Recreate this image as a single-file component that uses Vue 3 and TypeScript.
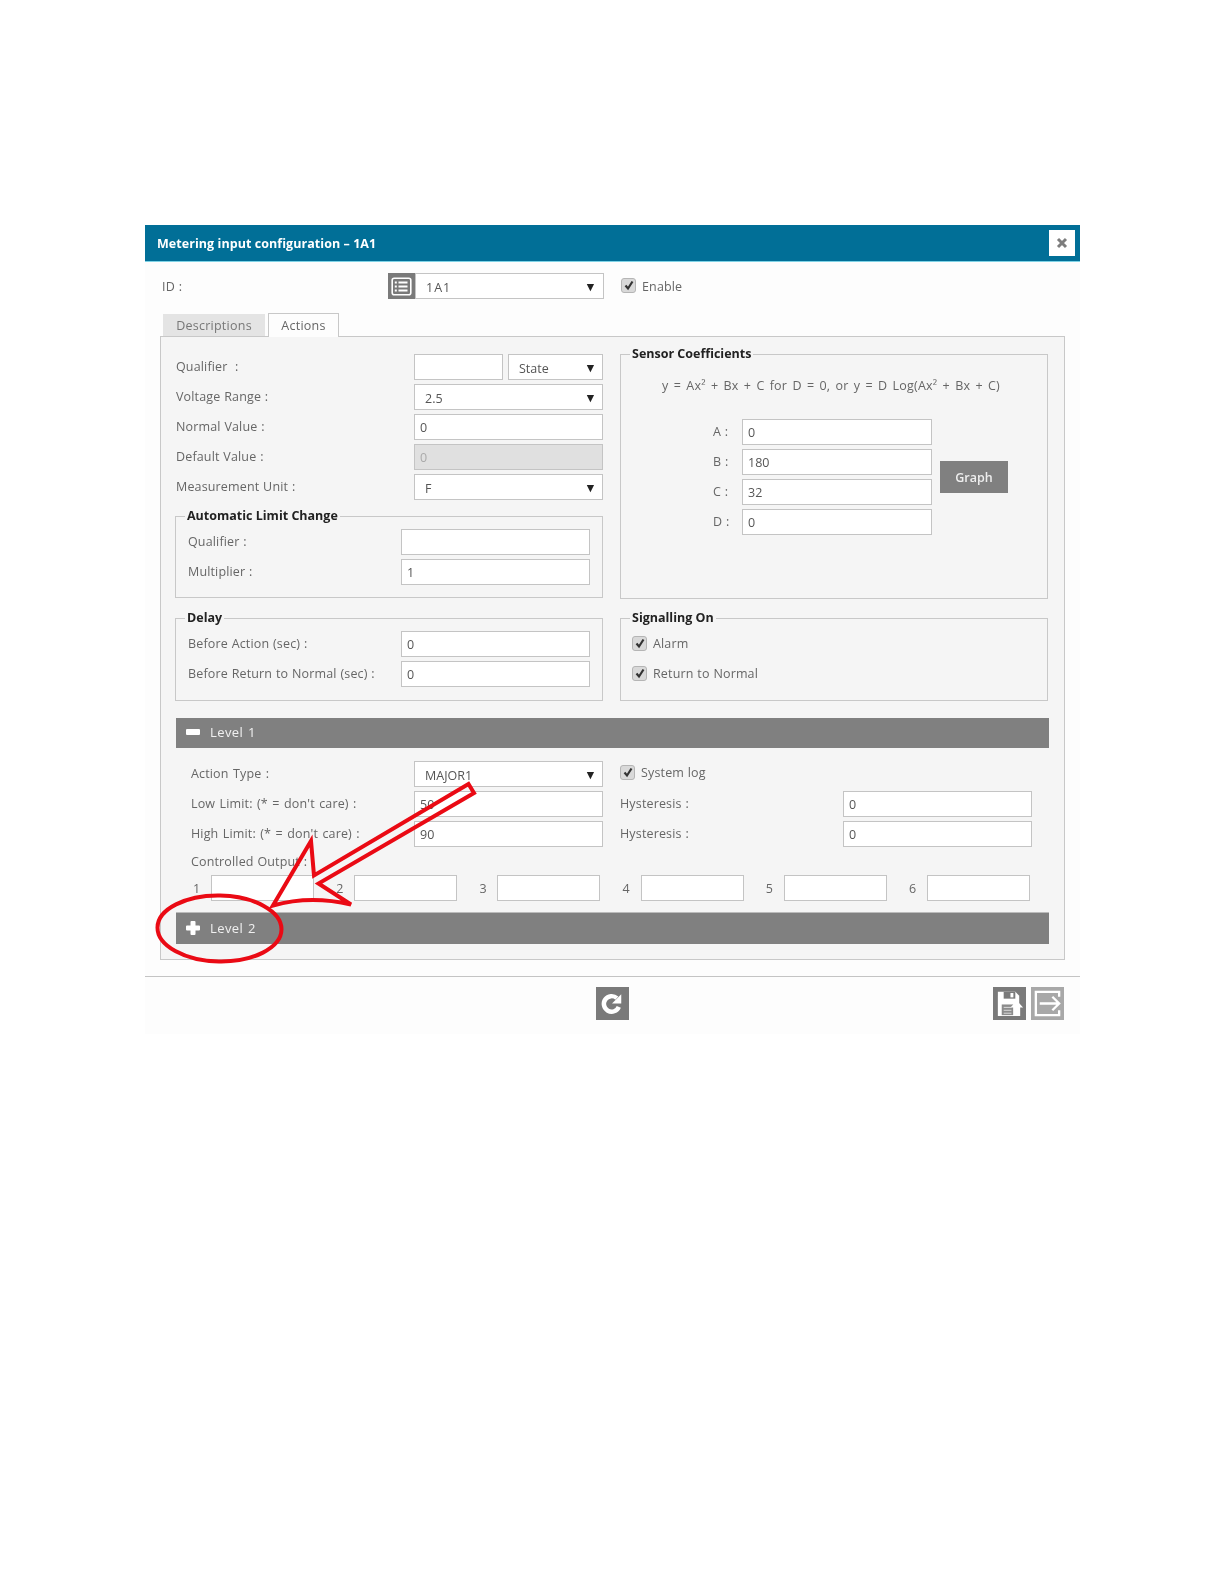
<script setup lang="ts">
interface Row { label: string; value?: string; select?: boolean; disabled?: boolean }
const mainRows: Row[] = [
  { label: 'Voltage Range :', value: '2.5', select: true },
  { label: 'Normal Value :', value: '0' },
  { label: 'Default Value :', value: '0', disabled: true },
  { label: 'Measurement Unit :', value: 'F', select: true },
]
const coefficients = [
  { label: 'A :', value: '0' },
  { label: 'B :', value: '180' },
  { label: 'C :', value: '32' },
  { label: 'D :', value: '0' },
]
const outputs = ['1', '2', '3', '4', '5', '6']
</script>

<template>
  <div class="dialog">
    <header class="head">
      <span class="title">Metering input configuration – 1A1</span>
      <span class="close">
        <svg width="12" height="12" viewBox="0 0 12 12"><path d="M2 2l8 8M10 2l-8 8" stroke="#7d7d7d" stroke-width="3" /></svg>
      </span>
    </header>

    <div class="id-row">
      <span class="lbl id-lbl">ID :</span>
      <span class="list-btn">
        <svg width="21" height="19" viewBox="0 0 21 19" fill="none" stroke="#fff">
          <rect x="1.2" y="1.2" width="18.6" height="16.6" rx="2" stroke-width="1.6" />
          <path d="M7.5 5.5h9M7.5 9.5h9M7.5 13.5h9M3.8 5.5h2M3.8 9.5h2M3.8 13.5h2" stroke-width="1.8" />
        </svg>
      </span>
      <div class="field sel id-sel"><span>1A1</span><i class="caret">▼</i></div>
      <span class="check id-check"><svg width="12" height="12" viewBox="0 0 12 12"><path d="M2.5 6.5l2.5 3 4.5-7" fill="none" stroke="#333" stroke-width="2.2" /></svg></span>
      <span class="lbl">Enable</span>
    </div>

    <div class="tabs">
      <span class="tab">Descriptions</span>
      <span class="tab active">Actions</span>
    </div>

    <section class="panel">
      <div class="columns">
        <div class="left">
          <div class="rows top-rows">
            <div class="row">
              <span class="lbl">Qualifier&nbsp; :</span>
              <div class="pair">
                <div class="field qual"></div>
                <div class="field sel state"><span>State</span><i class="caret">▼</i></div>
              </div>
            </div>
            <div v-for="r in mainRows" :key="r.label" class="row">
              <span class="lbl">{{ r.label }}</span>
              <div class="field wide" :class="{ sel: r.select, off: r.disabled }">
                <span>{{ r.value }}</span><i v-if="r.select" class="caret">▼</i>
              </div>
            </div>
          </div>

          <fieldset class="box auto-box">
            <legend>Automatic Limit Change</legend>
            <div class="rows">
              <div class="row inner"><span class="lbl">Qualifier :</span><div class="field wide"></div></div>
              <div class="row inner"><span class="lbl">Multiplier :</span><div class="field wide">1</div></div>
            </div>
          </fieldset>

          <fieldset class="box delay-box">
            <legend>Delay</legend>
            <div class="rows">
              <div class="row inner"><span class="lbl">Before Action (sec) :</span><div class="field wide">0</div></div>
              <div class="row inner"><span class="lbl">Before Return to Normal (sec) :</span><div class="field wide">0</div></div>
            </div>
          </fieldset>
        </div>

        <div class="right">
          <fieldset class="box sensor">
            <legend>Sensor Coefficients</legend>
            <p class="formula">y = Ax² + Bx + C for D = 0, or y = D Log(Ax² + Bx + C)</p>
            <div class="coef">
              <div class="rows">
                <div v-for="c in coefficients" :key="c.label" class="coef-row">
                  <span class="lbl coef-lbl">{{ c.label }}</span>
                  <div class="field coef-in">{{ c.value }}</div>
                </div>
              </div>
              <span class="graph">Graph</span>
            </div>
          </fieldset>

          <fieldset class="box signal">
            <legend>Signalling On</legend>
            <div class="rows">
              <div class="check-row">
                <span class="check"><svg width="12" height="12" viewBox="0 0 12 12"><path d="M2.5 6.5l2.5 3 4.5-7" fill="none" stroke="#333" stroke-width="2.2" /></svg></span>
                <span class="lbl">Alarm</span>
              </div>
              <div class="check-row">
                <span class="check"><svg width="12" height="12" viewBox="0 0 12 12"><path d="M2.5 6.5l2.5 3 4.5-7" fill="none" stroke="#333" stroke-width="2.2" /></svg></span>
                <span class="lbl">Return to Normal</span>
              </div>
            </div>
          </fieldset>
        </div>
      </div>

      <div class="bar">
        <svg class="bar-ico" width="14" height="14" viewBox="0 0 14 14"><rect x="0" y="4" width="14" height="6" rx="1" fill="#fff" /></svg>
        <span>Level 1</span>
      </div>
      <div class="level">
        <div class="lv-grid">
          <div class="row lv"><span class="lbl">Action Type :</span>
            <div class="field wide sel"><span>MAJOR1</span><i class="caret">▼</i></div></div>
          <div class="check-row syslog">
            <span class="check"><svg width="12" height="12" viewBox="0 0 12 12"><path d="M2.5 6.5l2.5 3 4.5-7" fill="none" stroke="#333" stroke-width="2.2" /></svg></span>
            <span class="lbl">System log</span>
          </div>
          <div class="row lv"><span class="lbl">Low Limit: (* = don't care) :</span><div class="field wide">50</div></div>
          <div class="row hy"><span class="lbl">Hysteresis :</span><div class="field wide">0</div></div>
          <div class="row lv"><span class="lbl">High Limit: (* = don't care) :</span><div class="field wide">90</div></div>
          <div class="row hy"><span class="lbl">Hysteresis :</span><div class="field wide">0</div></div>
        </div>
        <div class="lbl co-lbl">Controlled Output :</div>
        <div class="outs">
          <div v-for="o in outputs" :key="o" class="out">
            <span class="lbl out-n">{{ o }}</span>
            <div class="field out-in"></div>
          </div>
        </div>
      </div>
      <div class="bar bar2">
        <svg class="bar-ico" width="14" height="14" viewBox="0 0 14 14"><path d="M4.5 1a1 1 0 0 1 1-1h3a1 1 0 0 1 1 1v3.500h3.500a1 1 0 0 1 1 1v3a1 1 0 0 1-1 1H9.500V13a1 1 0 0 1-1 1h-3a1 1 0 0 1-1-1V9.500H1a1 1 0 0 1-1-1v-3a1 1 0 0 1 1-1h3.500z" fill="#fff" /></svg>
        <span>Level 2</span>
      </div>
    </section>

    <footer class="foot">
      <span></span>
      <span class="tool">
        <svg width="33" height="33" viewBox="0 0 34 34" fill="none">
          <path d="M23.500 20.500a8 8 0 1 1-2-9" stroke="#fff" stroke-width="4.600" />
          <path d="M26 7.500v9.500h-9.500z" fill="#fff" />
        </svg>
      </span>
      <div class="tools-right">
        <span class="tool">
          <svg width="33" height="33" viewBox="0 0 34 34">
            <path d="M5 5h18l4 4v21H5z" fill="#fff" />
            <rect x="11" y="5" width="12" height="7" fill="#7a7a7a" />
            <rect x="18" y="6.200" width="3" height="4.500" fill="#fff" />
            <rect x="9" y="18" width="12" height="11" fill="#8c8c8c" />
            <path d="M11 21h8M11 24h8M11 27h8" stroke="#ddd" stroke-width="1" />
            <path d="M24.500 14l6.500 7h-3v9h-7v-9h-3z" fill="#fff" />
          </svg>
        </span>
        <span class="tool light">
          <svg width="33" height="33" viewBox="0 0 34 34" fill="none" stroke="#fff" stroke-width="2.400">
            <path d="M29 10V5H5v24h24v-5" />
            <path d="M9 17h20M22 10l7 7-7 7" />
          </svg>
        </span>
      </div>
    </footer>
  </div>

  <svg class="marks" width="1224" height="1584" viewBox="0 0 1224 1584" fill="none">
    <path d="M468.500 784L314 875.500 311 841 273 905.500Q310 895 351 904.500L318.500 883.500 474 793z" stroke="#ea0a14" stroke-width="4" stroke-linejoin="miter" />
    <ellipse cx="219.500" cy="928.500" rx="62" ry="33" stroke="#ea0a14" stroke-width="4" transform="rotate(1 219.500 928.500)" />
  </svg>
</template>

<style>
html, body { margin: 0; background: #fff; }
</style>

<style scoped>
.dialog {
  width: 935px;
  height: 809px;
  margin: 225px 0 0 145px;
  background: #fdfdfd;
  font-family: "Open Sans", "Liberation Sans", sans-serif;
  font-size: 12.5px;
  color: #666;
  display: flex;
  flex-direction: column;
  box-sizing: border-box;
  filter: blur(0.35px);
}
.head {
  height: 37px;
  flex: none;
  background: #016f97;
  border-bottom: 1px solid #7fd3e6;
  box-sizing: border-box;
  display: flex;
  align-items: center;
  justify-content: space-between;
  padding: 0 5px 0 12px;
}
.title { color: #fff; font-weight: 700; font-size: 12.5px; letter-spacing: 0.06px; }
.close {
  width: 26px; height: 26px; background: #fff;
  display: flex; align-items: center; justify-content: center;
}
.lbl { color: #666; white-space: nowrap; letter-spacing: 0.15px; word-spacing: 0.4px; }
.id-row {
  display: flex; align-items: center; height: 26px;
  margin: 11px 0 0 17px;
}
.id-lbl { width: 226px; }
.list-btn {
  width: 27px; height: 26px; background: #7a7a7a;
  display: flex; align-items: center; justify-content: center;
}
.field {
  height: 26px; box-sizing: border-box;
  border: 1px solid #c4c4c4; background: #fff;
  padding: 0 5px; display: flex; align-items: center;
  color: #555;
}
.sel { padding: 2px 8px 0 10px; justify-content: space-between; }
.caret { font-style: normal; font-size: 9.5px; color: #222; margin-top: -2px; font-family: "DejaVu Sans", sans-serif; }
.id-sel { width: 189px; letter-spacing: 1px; }
.check {
  width: 15px; height: 15px; box-sizing: border-box;
  border: 1px solid #b5b5b5; border-radius: 3px; background: #d9d9d9;
  display: inline-flex; align-items: center; justify-content: center; flex: none;
}
.id-check { margin: -2px 6px 0 17px; }
.tabs { display: flex; gap: 3px; margin: 14px 0 0 18px; height: 23px; position: relative; z-index: 1; align-items: flex-end; }
.tab {
  width: 102px; height: 22px; box-sizing: border-box;
  background: #e4e4e4; color: #777; letter-spacing: 0.25px;
  display: flex; align-items: center; justify-content: center;
}
.tab.active {
  width: 71px; height: 24px; margin-bottom: -1px;
  background: #fdfdfd; border: 1px solid #c8c8c8; border-bottom: none; color: #666;
}
.panel {
  margin: 0 0 0 15px; width: 905px; height: 624px; flex: none;
  box-sizing: border-box;
  border: 1px solid #c8c8c8;
  background: #f5f5f5;
  padding: 9px 14px 15px 14px;
}
.columns { display: flex; gap: 17px; }
.left { width: 428px; }
.right { width: 428px; display: flex; flex-direction: column; gap: 11px; }
.top-rows { padding-top: 8px; margin-bottom: 8px; }
.rows { display: flex; flex-direction: column; gap: 4px; }
.row { display: flex; align-items: center; justify-content: space-between; height: 26px; }
.row > .lbl { padding-left: 1px; margin-top: -2px; }
.row.lv > .lbl, .row.hy > .lbl { padding-left: 0; }
.row.lv > .lbl { word-spacing: 1px; }
.wide { width: 189px; }
.pair { display: flex; gap: 5px; }
.qual { width: 89px; }
.state { width: 95px; }
.off { background: #e0e0e0; color: #aaa; }
.box {
  margin: 0; min-width: 0; box-sizing: border-box;
  border: 1px solid #c8c8c8;
  padding: 5px 12px 0 11px;
}
.box legend {
  margin-left: -2px; padding: 0 2px;
  color: #222; font-weight: 700; font-size: 12.5px;
  line-height: 16px; height: 16px;
}
.auto-box { height: 90px; }
.delay-box { height: 91px; margin-top: 12px; padding-top: 5px; }
.sensor { height: 253px; }
.signal { height: 91px; padding-top: 4px; }
.formula { margin: 10px 5px 0 0; text-align: center; color: #666; letter-spacing: 0.2px; word-spacing: 1.8px; }
.coef { display: flex; align-items: center; margin-top: 25px; padding-left: 81px; gap: 8px; }
.coef-row { display: flex; align-items: center; height: 26px; }
.coef-lbl { width: 29px; margin-top: -2px; }
.coef-in { width: 190px; }
.graph {
  width: 68px; height: 32px; background: #808080; color: #eee; font-weight: 600;
  display: flex; align-items: center; justify-content: center;
}
.check-row { display: flex; align-items: center; height: 26px; gap: 6px; }
.bar {
  height: 30px; width: 873px; margin: 17px 0 0 1px;
  background: #808080; color: #f0f0f0;
  display: flex; align-items: center;
  font-size: 13px; letter-spacing: 0.4px; word-spacing: 1px;
  box-sizing: border-box; padding-bottom: 2px;
}
.bar-ico { margin: 0 10px 0 10px; }
.bar2 { margin-top: 0; height: 32px; border-top: 1px solid #bbb; }
.level { height: 164px; box-sizing: border-box; padding: 13px 17px 0 15px; width: 873px; margin-left: 1px; }
.lv-grid { display: grid; grid-template-columns: 412px 412px; column-gap: 17px; row-gap: 4px; }
.hy { width: 412px; }
.syslog { margin-top: -2px; }
.co-lbl { margin-top: 6px; height: 22px; }
.outs { display: flex; margin-left: -2px; }
.out { width: 143.2px; display: flex; align-items: center; flex: none; }
.out-n { width: 22px; padding-left: 4px; box-sizing: border-box; }
.out-in { width: 103px; }
.foot {
  margin-top: 16px; flex: none;
  border-top: 1px solid #c4c4c4;
  padding: 10px 16px 0;
  display: grid; grid-template-columns: 1fr auto 1fr;
}
.tools-right { justify-self: end; display: flex; gap: 5px; }
.tool { width: 33px; height: 33px; background: #7a7a7a; display: block; }
.tool.light { background: #a8a8a8; }
.tool svg { display: block; }
.marks { position: absolute; left: 0; top: 0; pointer-events: none; }
</style>
